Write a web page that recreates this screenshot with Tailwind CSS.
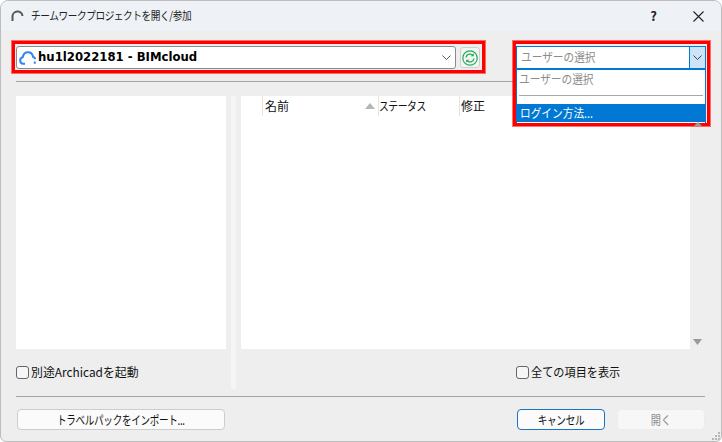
<!DOCTYPE html>
<html lang="ja">
<head>
  <meta charset="UTF-8" />
  <title>チームワークプロジェクトを開く/参加</title>
  <script src="https://cdn.jsdelivr.net/npm/@tailwindcss/browser@4"></script>
</head>
<body class="bg-white overflow-hidden">
  <div class="relative w-[722px] h-[442px] flex flex-col bg-[#eeeeee] border border-[#bdbdbd] rounded-t-lg rounded-b-md overflow-hidden text-[12px] text-[#111] font-['Noto_Sans_CJK_JP','Noto_Sans',sans-serif]">

    <!-- title bar -->
    <div class="h-[30px] shrink-0 flex items-center bg-[#eef2f6] pl-[10px] pr-[17px]">
      <svg class="w-[13px] h-[13px] mr-[7px] shrink-0" viewBox="0 0 13 13" fill="none"><path d="M1.500 11V7a5 5 0 0 1 10 -1" stroke="#555" stroke-width="2"/></svg>
      <span class="inline-block origin-left scale-x-[.84] whitespace-nowrap text-[11.5px] text-[#222] tracking-[-0.5px]">チームワークプロジェクトを開く/参加</span>
      <span class="ml-auto mr-[36px] text-[13px] font-bold text-[#222]">?</span>
      <svg class="w-[11px] h-[11px]" viewBox="0 0 11 11" fill="none"><path d="M.5.5l10 10M10.500.5l-10 10" stroke="#222" stroke-width="1.100"/></svg>
    </div>

    <!-- content -->
    <div class="flex-1 flex flex-col pl-[15px] pr-[16px] pt-[15px]">
      <div class="h-[23px] flex shrink-0">
        <div class="w-[440px] h-[23px] flex items-center bg-white border border-[#8a8a8a] rounded-[3px] pl-[2px] pr-[4px]">
          <svg class="w-[17px] h-[14px] mr-[2px] shrink-0" viewBox="0 0 17 14" fill="none"><path d="M6 12.800H4.300a3.300 3.300 0 0 1-.6-6.500C4.300 3 6.500 1.200 9 1.200c2.700 0 4.600 2 5 4.500 1.300.4 2.100 1.400 2.100 2.600M15.800 10.500v2.300" stroke="#2f86f0" stroke-width="2"/></svg>
          <span class="font-['DejaVu_Sans',sans-serif] font-bold text-[11.7px] text-black">hu1l2022181 - BIMcloud</span>
          <svg class="ml-auto w-[9px] h-[6px]" viewBox="0 0 9 6" fill="none"><path d="M.5.5l4 4 4-4" stroke="#555"/></svg>
        </div>
        <div class="ml-[4px] mt-[1px] w-[20px] h-[21px] flex items-center justify-center bg-[#f4f4f4] border border-[#cfcfcf] rounded-[3px]">
          <svg class="w-[16px] h-[16px]" viewBox="0 0 16 16" fill="none"><circle cx="8" cy="8" r="7.200" stroke="#1fae55" stroke-width="1.200"/><path d="M4 7.500a4 4 0 0 1 7-2M12 8.500a4 4 0 0 1-7 2" stroke="#1fae55" stroke-width="1.300"/><path d="M11.800 3.300v3h-3zM4.200 12.700v-3h3z" fill="#1fae55"/></svg>
        </div>
      </div>

      <div class="h-px bg-[#a3a3a3] mt-[12px] w-[505px] shrink-0"></div>

      <div class="flex mt-[14px] h-[293px] shrink-0">
        <div class="w-[210px] flex flex-col">
          <div class="h-[253px] bg-white"></div>
          <label class="flex items-center h-[40px] pt-[6px]">
            <span class="w-[13px] h-[13px] border border-[#666] rounded-[3px] bg-[#f6f6f6] mr-[2px] shrink-0"></span>
            <span class="inline-block origin-left scale-x-[.99] whitespace-nowrap">別途Archicadを起動</span>
          </label>
        </div>
        <div class="w-[5px] ml-[5px] bg-[#f5f5f5]"></div>
        <div class="ml-[5px] flex-1 flex flex-col">
          <div class="flex">
            <div class="w-[449px] h-[253px] bg-white">
              <div class="flex h-[20px] items-center">
                <div class="w-[22px] h-full border-r border-[#e4e4e4]"></div>
                <div class="w-[116px] h-full flex items-center border-r border-[#e4e4e4] pl-[2px]">名前
                  <svg class="ml-auto mr-[3px] w-[10px] h-[6px]" viewBox="0 0 10 6"><path d="M5 0l5 6H0z" fill="#b5b5b5"/></svg>
                </div>
                <div class="w-[81px] h-full flex items-center border-r border-[#e4e4e4]">
                  <span class="inline-block origin-left scale-x-[.82] whitespace-nowrap tracking-[-0.6px]">ステータス</span>
                </div>
                <div class="pl-[1px]">修正</div>
              </div>
            </div>
            <div class="flex-1 flex flex-col items-center justify-end pb-[4px]">
              <svg class="w-[9px] h-[6px]" viewBox="0 0 9 6"><path d="M0 0h9L4.500 6z" fill="#9a9a9a"/></svg>
            </div>
          </div>
          <label class="flex items-center h-[40px] pt-[6px] pl-[275px]">
            <span class="w-[13px] h-[13px] border border-[#666] rounded-[3px] bg-[#f6f6f6] mr-[2px] shrink-0"></span>
            <span class="inline-block origin-left scale-x-[.93] whitespace-nowrap">全ての項目を表示</span>
          </label>
        </div>
      </div>

      <div class="h-px bg-[#a3a3a3] mt-[7px] shrink-0"></div>

      <div class="flex items-center mt-[12px] pl-px">
        <button class="w-[208px] h-[21px] bg-[#fbfbfb] border border-[#cdcdcd] rounded-[4px] text-[12px]"><span class="inline-block scale-x-[.8] whitespace-nowrap tracking-[-0.4px]">トラベルパックをインポート...</span></button>
        <button class="ml-auto w-[88px] h-[21px] bg-[#fbfbfb] border border-[#1a73c4] rounded-[4px] text-[12px]"><span class="inline-block scale-x-[.8] whitespace-nowrap tracking-[-0.4px]">キャンセル</span></button>
        <button class="ml-[12px] w-[88px] h-[21px] bg-[#f7f7f7] border border-[#ececec] rounded-[4px] text-[12px] text-[#8a8a8a]"><span class="inline-block scale-x-[.85] whitespace-nowrap">開く</span></button>
      </div>
    </div>

    <!-- resize grip -->
    <svg class="absolute right-[1px] bottom-[1px] w-[9px] h-[9px]" viewBox="0 0 9 9" fill="#b5b5b5"><rect x="7" y="1" width="2" height="2"/><rect x="4" y="4" width="2" height="2"/><rect x="7" y="4" width="2" height="2"/><rect x="1" y="7" width="2" height="2"/><rect x="4" y="7" width="2" height="2"/><rect x="7" y="7" width="2" height="2"/></svg>

    <!-- user combo with open list -->
    <div class="absolute left-[515px] top-[45px] w-[190px] text-[#8c8c8c]">
      <div class="h-[23px] flex bg-white border border-[#0078d4]">
        <span class="flex-1 pl-[4px] leading-[20px]"><span class="inline-block origin-left scale-x-[.89] whitespace-nowrap">ユーザーの選択</span></span>
        <span class="w-[16px] flex items-center justify-center bg-[#cce4f7] border-l border-[#0078d4]">
          <svg class="w-[9px] h-[6px]" viewBox="0 0 9 6" fill="none"><path d="M.5.5l4 4 4-4" stroke="#444"/></svg>
        </span>
      </div>
      <div class="h-[55px] bg-white border-x border-t border-[#0078d4]">
        <div class="h-[21px] pl-[2px] leading-[17px]"><span class="inline-block origin-left scale-x-[.89] whitespace-nowrap">ユーザーの選択</span></div>
        <div class="h-px bg-[#a8a8a8] mx-[2px] mt-[4px]"></div>
        <div class="h-[18px] mt-[8px] bg-[#0078d4] text-white pl-[3px] leading-[18px]"><span class="inline-block origin-left scale-x-[.89] whitespace-nowrap">ログイン方法...</span></div>
      </div>
    </div>

    <!-- red annotation frames -->
    <div class="absolute left-[11px] top-[40px] w-[473px] h-[32px] border-[3px] border-[#ff0000] shadow-[0_0_0_1px_rgba(255,0,0,0.55)]"></div>
    <div class="absolute left-[512px] top-[40px] w-[197px] h-[85px] border-[3px] border-[#ff0000] shadow-[0_0_0_1px_rgba(255,0,0,0.55)]"></div>

    <!-- list's up arrow, its tip shows above the frame -->
    <svg class="absolute left-[693px] top-[121px] w-[8px] h-[4px]" viewBox="0 0 8 4"><path d="M4 0l4 4H0z" fill="#9a9a9a"/></svg>
  </div>
</body>
</html>
